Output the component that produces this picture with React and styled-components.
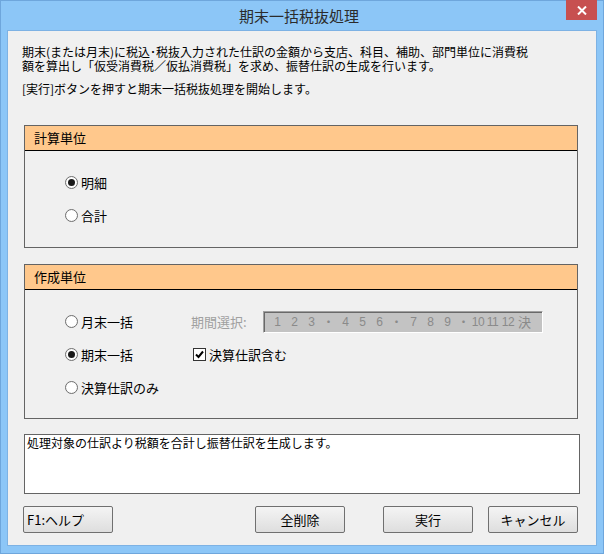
import React from "react";
import styled, { createGlobalStyle } from "styled-components";

const Global = createGlobalStyle`
  html, body { margin: 0; padding: 0; background: #ffffff; }
  body { width: 604px; height: 554px; overflow: hidden; font-family: "Noto Sans CJK JP", "Noto Sans", sans-serif; }
  * { box-sizing: border-box; }
`;

const Window = styled.div`
  width: 604px;
  height: 554px;
  background: #8cc6f7;
  border: 1px solid #6ea6dc;
  display: flex;
  flex-direction: column;
`;

const TitleBar = styled.div`
  height: 29px;
  display: grid;
  grid-template-columns: 1fr auto 1fr;
  align-items: start;
  padding-right: 6px;
`;

const Title = styled.div`
  grid-column: 2;
  font-size: 15px;
  line-height: 15px;
  margin-top: 7px;
  color: #2b2b2b;
  white-space: nowrap;
`;

const CloseButton = styled.div`
  grid-column: 3;
  justify-self: end;
  width: 31px;
  height: 20px;
  margin-top: -1px;
  background: #c75050;
  display: flex;
  align-items: center;
  justify-content: center;
`;

const Client = styled.div`
  margin: 0 6px 7px 6px;
  flex: 1;
  background: #f0f0f0;
  border: 1px solid #7db2e4;
  display: flex;
  flex-direction: column;
  padding: 0 18px 0 16px;
`;

const Description = styled.div`
  margin: 14px 0 0 -2px;
  font-size: 12px;
  line-height: 14px;
  color: #000;
  white-space: nowrap;
`;

const Paragraph = styled.p`
  margin: 0;
  & + & { margin-top: 9px; }
`;

const Group = styled.div`
  margin-top: ${(p) => p.$top}px;
  border: 1px solid #646464;
  display: flex;
  flex-direction: column;
`;

const GroupHeader = styled.div`
  height: 25px;
  background: #ffc88c;
  border-bottom: 1px solid #000;
  padding-left: 9px;
  font-size: 13px;
  line-height: 24px;
  color: #000;
`;

const GroupBody = styled.div`
  height: ${(p) => p.$height}px;
  padding: 15px 0 0 40px;
  display: grid;
  grid-template-columns: 126px auto;
  grid-auto-rows: 33px;
  align-items: center;
  align-content: start;
`;

const Option = styled.label`
  display: flex;
  align-items: center;
  gap: 3px;
  font-size: 13px;
  line-height: 15px;
  color: #000;
  white-space: nowrap;
`;

const Radio = styled.span`
  width: 13px;
  height: 13px;
  border-radius: 50%;
  border: 1px solid #6f6f6f;
  background: radial-gradient(circle, #ffffff 55%, #e6e6e6 100%);
  display: flex;
  align-items: center;
  justify-content: center;
  &::after {
    content: "";
    width: 7px;
    height: 7px;
    border-radius: 50%;
    background: #1a1a1a;
    display: ${(p) => (p.$checked ? "block" : "none")};
  }
`;

const CheckBox = styled.span`
  width: 13px;
  height: 13px;
  border: 1px solid #333;
  background: #fff;
  display: flex;
  align-items: center;
  justify-content: center;
`;

const PeriodRow = styled.div`
  display: flex;
  align-items: center;
  gap: 11px;
`;

const PeriodLabel = styled.span`
  font-size: 13px;
  color: #a0a0a0;
  white-space: nowrap;
  width: 61px;
`;

const PeriodBox = styled.div`
  width: 280px;
  height: 22px;
  background: #c3c3c3;
  border-top: 1px solid #a0a0a0;
  border-left: 1px solid #a0a0a0;
  border-right: 1px solid #ffffff;
  border-bottom: 1px solid #ffffff;
  box-shadow: inset 1px 1px 0 #696969;
  display: flex;
  align-items: center;
  padding-left: 5px;
`;

const PeriodCell = styled.span`
  width: ${(p) => p.$w}px;
  text-align: center;
  font-family: "Liberation Sans", "Noto Sans CJK JP", sans-serif;
  font-size: 12px;
  color: #8a8a8a;
  letter-spacing: ${(p) => (p.$tight ? "-0.5px" : "0")};
  &:last-child { font-family: "Noto Sans CJK JP", sans-serif; font-size: 13px; }
`;

const Message = styled.div`
  margin-top: 15px;
  height: 60px;
  background: #fff;
  border: 1px solid #646464;
  padding: 1px 0 0 2px;
  font-size: 12px;
  line-height: 14px;
  color: #000;
  margin-right: -2px;
`;

const ButtonBar = styled.div`
  margin-top: 12px;
  display: flex;
  align-items: center;
  margin-left: -1px;
  margin-right: -2px;
`;

const Button = styled.div`
  width: 90px;
  height: 27px;
  margin-left: ${(p) => p.$ml || 0}px;
  border: 1px solid #707070;
  border-radius: 2px;
  background: linear-gradient(#f4f4f4, #dedede);
  font-size: 13px;
  line-height: 25px;
  color: #000;
  text-align: ${(p) => (p.$left ? "left" : "center")};
  padding-left: ${(p) => (p.$left ? "3px" : "0")};
  white-space: nowrap;
`;

const periods = [
  ["1", 17], ["2", 17], ["3", 17], ["・", 17],
  ["4", 17], ["5", 17], ["6", 17], ["・", 17],
  ["7", 17], ["8", 17], ["9", 17], ["・", 15],
  ["10", 14, true], ["11", 15, true], ["12", 16, true], ["決", 17],
];

export default function App() {
  return (
    <>
      <Global />
      <Window>
        <TitleBar>
          <Title>期末一括税抜処理</Title>
          <CloseButton>
            <svg width="10" height="9" viewBox="0 0 10 9">
              <path d="M1 0.5 L9 8.5 M9 0.5 L1 8.5" stroke="#fff" strokeWidth="2" />
            </svg>
          </CloseButton>
        </TitleBar>
        <Client>
          <Description>
            <Paragraph>
              期末(または月末)に税込･税抜入力された仕訳の金額から支店、科目、補助、部門単位に消費税
              <br />
              額を算出し「仮受消費税／仮払消費税」を求め、振替仕訳の生成を行います。
            </Paragraph>
            <Paragraph>[実行]ボタンを押すと期末一括税抜処理を開始します。</Paragraph>
          </Description>

          <Group $top={29}>
            <GroupHeader>計算単位</GroupHeader>
            <GroupBody $height={96}>
              <Option>
                <Radio $checked />
                明細
              </Option>
              <span />
              <Option>
                <Radio />
                合計
              </Option>
            </GroupBody>
          </Group>

          <Group $top={16}>
            <GroupHeader>作成単位</GroupHeader>
            <GroupBody $height={128}>
              <Option>
                <Radio />
                月末一括
              </Option>
              <PeriodRow>
                <PeriodLabel>期間選択:</PeriodLabel>
                <PeriodBox>
                  {periods.map(([t, w, tight], i) => (
                    <PeriodCell key={i} $w={w} $tight={tight}>
                      {t}
                    </PeriodCell>
                  ))}
                </PeriodBox>
              </PeriodRow>
              <Option>
                <Radio $checked />
                期末一括
              </Option>
              <Option style={{ marginLeft: 2 }}>
                <CheckBox>
                  <svg width="9" height="9" viewBox="0 0 9 9">
                    <path d="M1 4.5 L3.5 7 L8 1.5" stroke="#000" strokeWidth="2" fill="none" />
                  </svg>
                </CheckBox>
                決算仕訳含む
              </Option>
              <Option>
                <Radio />
                決算仕訳のみ
              </Option>
            </GroupBody>
          </Group>

          <Message>処理対象の仕訳より税額を合計し振替仕訳を生成します。</Message>

          <ButtonBar>
            <Button $left>F1:ヘルプ</Button>
            <Button $ml={142}>全削除</Button>
            <Button $ml={38}>実行</Button>
            <Button $ml={15}>キャンセル</Button>
          </ButtonBar>
        </Client>
      </Window>
    </>
  );
}
